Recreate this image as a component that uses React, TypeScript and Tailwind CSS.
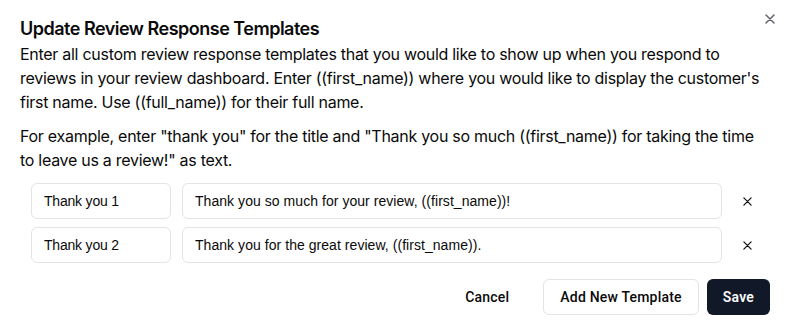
import React from "react";

const XIcon = ({ className }: { className?: string }) => (
  <svg viewBox="0 0 10 10" className={className} fill="none" stroke="currentColor" strokeLinecap="round">
    <path d="M1 1L9 9M9 1L1 9" />
  </svg>
);

const rows = [
  { title: "Thank you 1", text: "Thank you so much for your review, ((first_name))!" },
  { title: "Thank you 2", text: "Thank you for the great review, ((first_name))." },
];

export default function App() {
  return (
    <div className="relative w-[792px] h-[329px] bg-white text-[#0a0a0a] font-['Inter',sans-serif] overflow-hidden">
      <button className="absolute left-[764px] top-[13px] w-[12px] h-[12px] flex items-center justify-center text-[#5f6368]">
        <XIcon className="w-[10px] h-[10px] stroke-[1.5]" />
      </button>
      <div className="flex flex-col px-5 pt-[15px]">
        <h2 className="text-[18px] leading-[27px] font-semibold tracking-[-0.5px]">Update Review Response Templates</h2>
        <div className="w-[742px] text-[16px] leading-[24px] tracking-[-0.28px] flex flex-col gap-[10px]">
          <p>
            Enter all custom review response templates that you would like to show up when you respond to reviews in your
            review dashboard. Enter ((first_name)) where you would like to display the customer's first name. Use
            ((full_name)) for their full name.
          </p>
          <p>
            For example, enter "thank you" for the title and "Thank you so much ((first_name)) for taking the time to
            leave us a review!" as text.
          </p>
        </div>
        <div className="flex flex-col gap-2 pl-[11px] pr-[9px] mt-[11px] font-['Liberation_Sans',Arial,sans-serif]">
          {rows.map((r) => (
            <div key={r.title} className="flex items-center">
              <input
                readOnly
                value={r.title}
                className="w-[140px] h-[36px] rounded-md border border-[#e4e4e7] px-3 text-[14px] tracking-[-0.2px] text-[#0a0a0a] outline-none"
              />
              <input
                readOnly
                value={r.text}
                className="ml-[11px] flex-1 h-[36px] rounded-md border border-[#e4e4e7] px-3 text-[14px] tracking-[0.05px] text-[#0a0a0a] outline-none"
              />
              <button className="ml-[9px] w-[32px] h-[36px] flex items-center justify-center text-[#111]">
                <XIcon className="w-[9px] h-[9px] stroke-[1.4]" />
              </button>
            </div>
          ))}
        </div>
        <div className="flex justify-end items-center mt-4 pr-[2px] font-['Roboto',Arial,sans-serif] text-[14px] font-medium tracking-[0.2px]">
          <button className="h-[36px] px-4 mr-[18px] text-[#0a0a0a]">Cancel</button>
          <button className="h-[36px] px-4 rounded-md border border-[#e4e4e7] bg-white text-[#0a0a0a]">Add New Template</button>
          <button className="ml-2 h-[36px] px-4 rounded-md bg-[#111827] text-[#f8fafc] font-semibold">Save</button>
        </div>
      </div>
    </div>
  );
}
